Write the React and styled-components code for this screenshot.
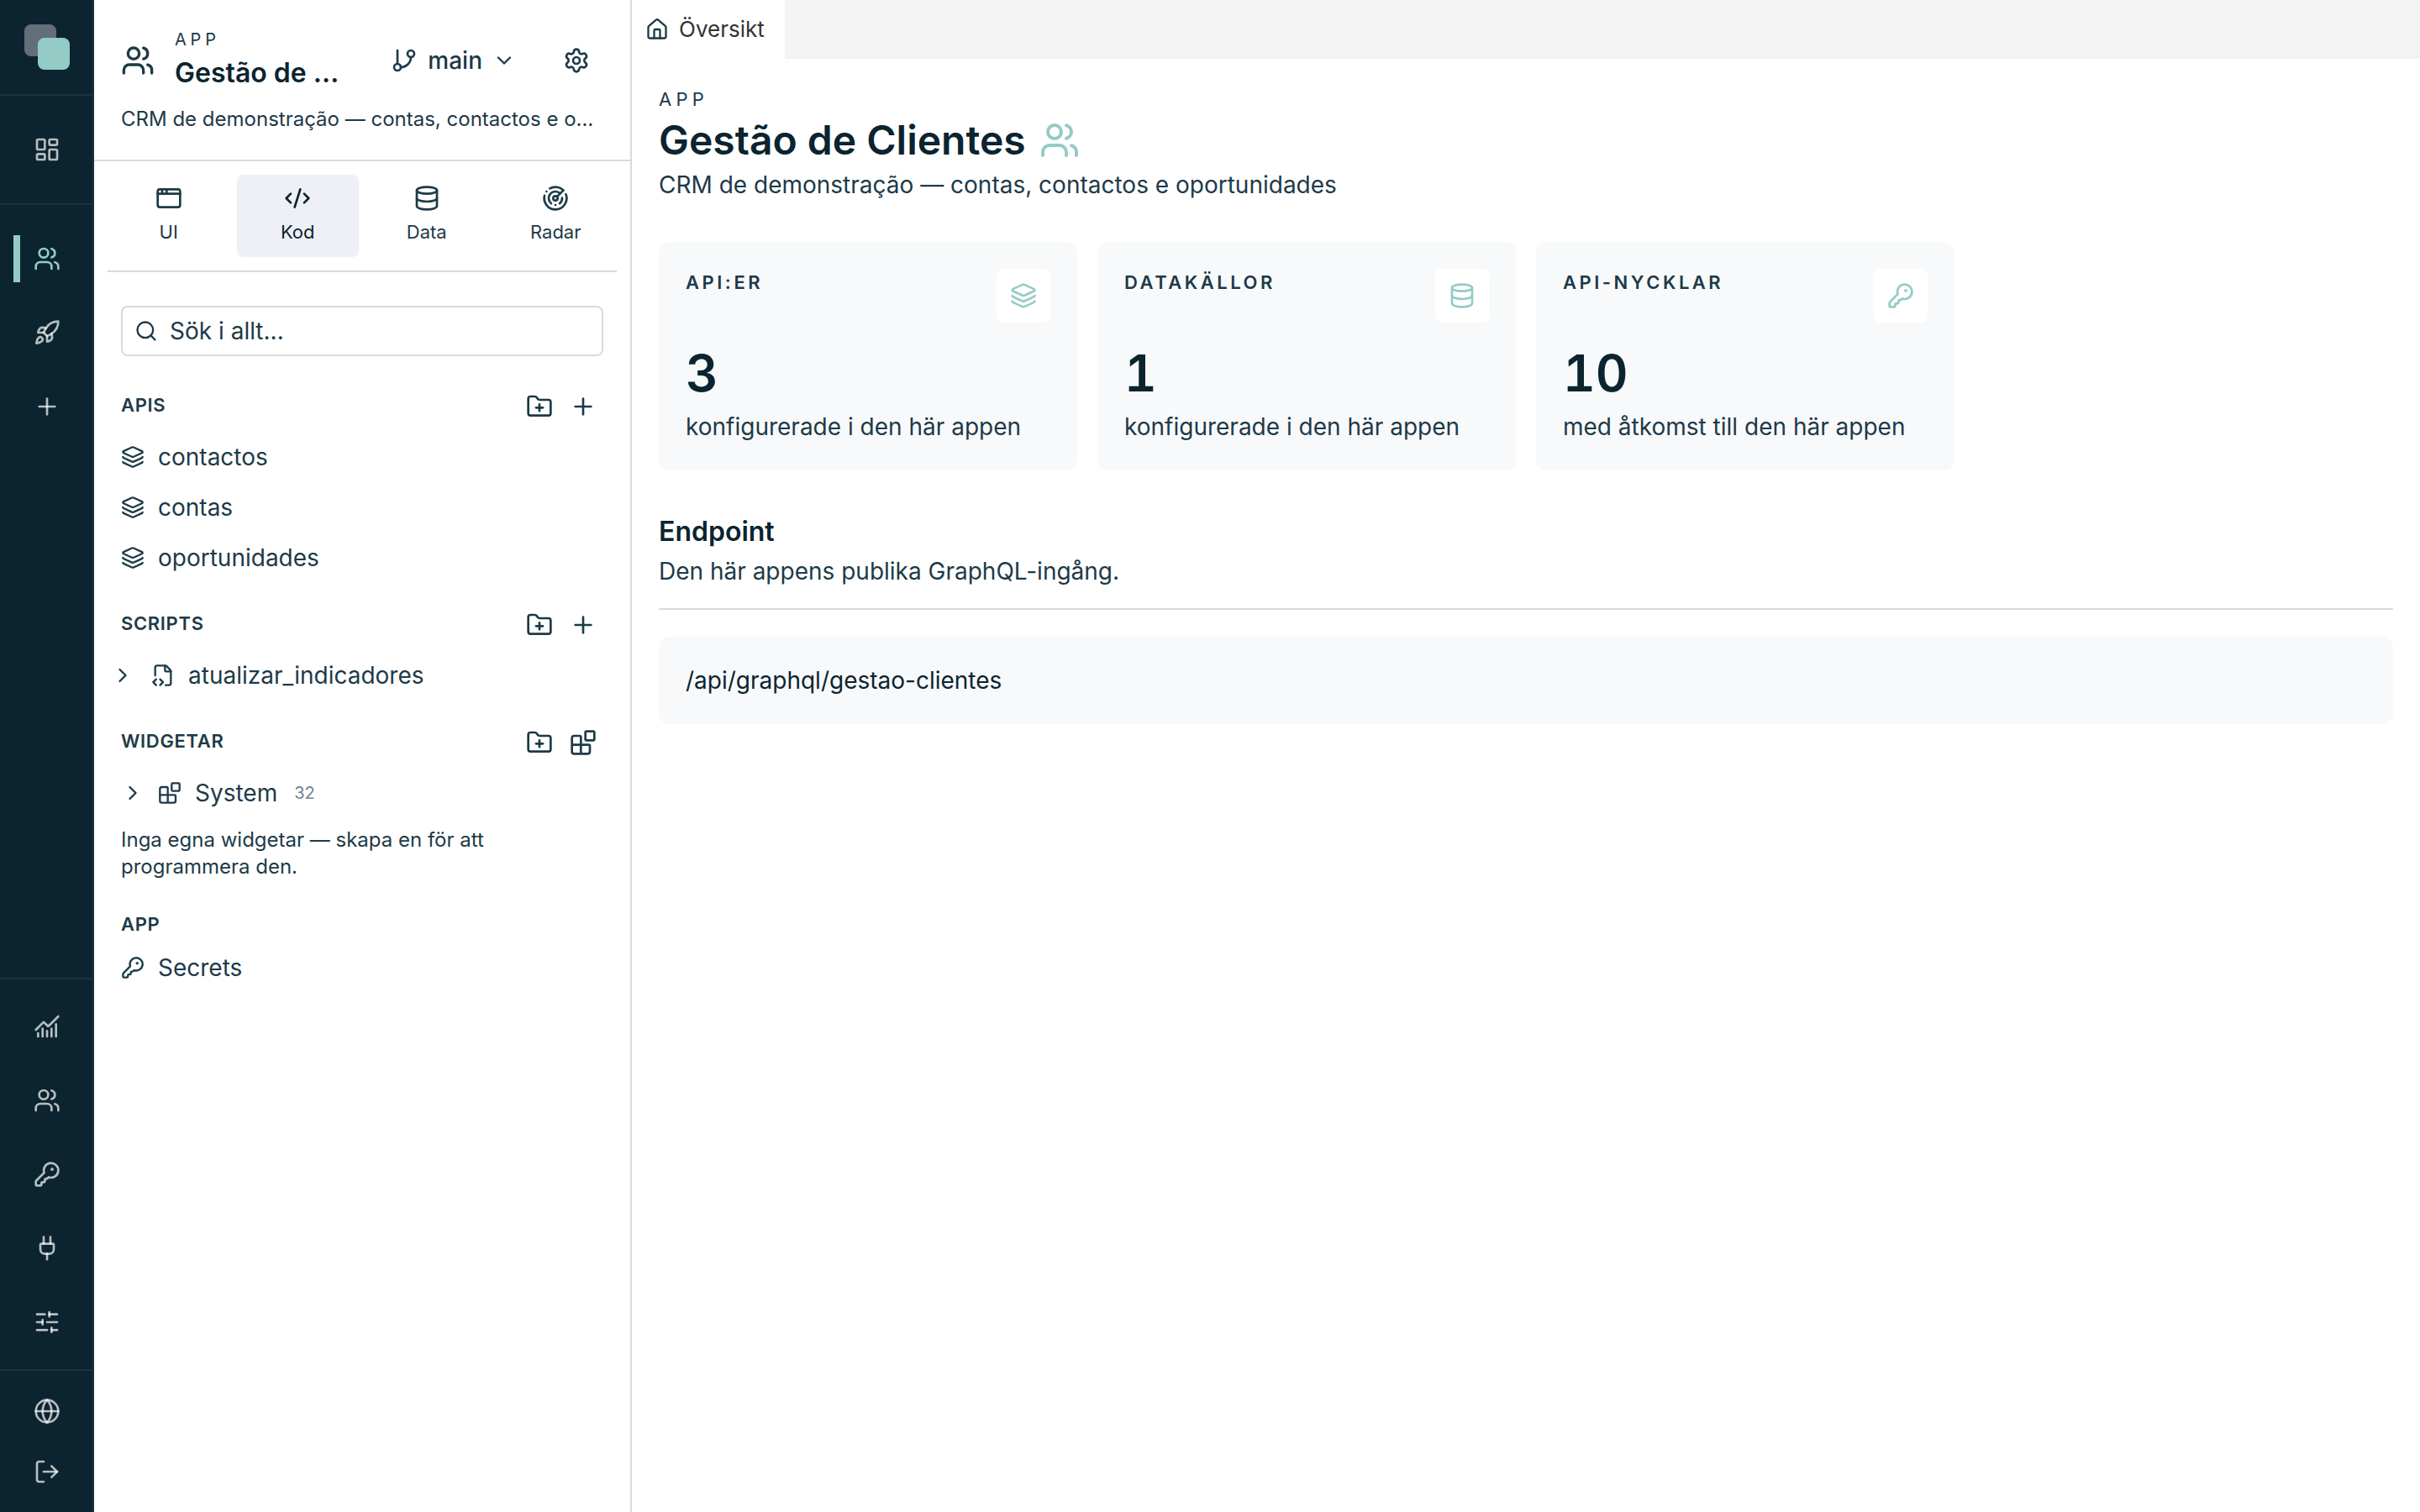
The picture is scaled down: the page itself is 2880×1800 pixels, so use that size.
import React from 'react';
import styled, { createGlobalStyle, css } from 'styled-components';
import {
  AppWindow, Blocks, ChartNoAxesCombined, ChevronDown, ChevronRight, CodeXml,
  Database, FileCode2, FolderPlus, GitBranch, Globe, House, KeyRound, Layers,
  LayoutDashboard, LogOut, Plug, Plus, Radar, Rocket, Search, Settings,
  SlidersHorizontal, Users,
} from 'lucide-react';

const color = {
  ink: '#0b242f',
  text: '#1d3a48',
  muted: '#74838d',
  line: '#d6dbe0',
  rail: '#0b242f',
  railLine: '#163341',
  accent: '#95cbc5',
  surface: '#f8f9fb',
  selected: '#eff0f5',
  tabBar: '#f3f3f3',
};

const GlobalStyle = createGlobalStyle`
  *, *::before, *::after { box-sizing: border-box; }
  body {
    margin: 0;
    background: #fff;
    color: ${color.text};
    font-family: Inter, "Liberation Sans", sans-serif;
    font-size: 28px;
    line-height: 40px;
  }
  h1, h2, h3, p { margin: 0; }
  button, input { font: inherit; color: inherit; }
  button { border: 0; padding: 0; background: none; cursor: pointer; }
  a { color: inherit; text-decoration: none; }
  svg { display: block; flex: none; }
`;

const truncate = css`
  overflow: hidden;
  text-overflow: ellipsis;
  white-space: nowrap;
`;

const Shell = styled.div`
  display: flex;
  min-height: 100vh;
`;

/* Rail */
const Rail = styled.nav`
  display: flex;
  flex-direction: column;
  flex: none;
  width: 112px;
  background: ${color.rail};
  box-shadow: inset -2px 0 ${color.railLine};
  color: rgba(255, 255, 255, 0.7);
`;

const RailLogo = styled.a`
  display: grid;
  place-items: center;
  height: 114px;
  border-bottom: 2px solid ${color.railLine};
`;

const RailGroup = styled.div`
  display: flex;
  flex-direction: column;
  align-items: center;
  gap: 8px;
  padding: ${(p) => p.$pad}px 0;
  border-top: ${(p) => (p.$top ? `2px solid ${color.railLine}` : '0')};
  border-bottom: ${(p) => (p.$bottom ? `2px solid ${color.railLine}` : '0')};
  margin-top: ${(p) => (p.$push ? 'auto' : '0')};
`;

const RailButton = styled.button`
  position: relative;
  display: grid;
  place-items: center;
  width: 80px;
  height: ${(p) => (p.$short ? 64 : 80)}px;
  color: ${(p) => (p.$active ? color.accent : 'inherit')};

  &::before {
    content: ${(p) => (p.$active ? '""' : 'none')};
    position: absolute;
    left: 0;
    top: 12px;
    bottom: 12px;
    width: 8px;
    background: ${color.accent};
  }
`;

/* Sidebar */
const Sidebar = styled.aside`
  flex: none;
  width: 640px;
  border-right: 2px solid ${color.line};
`;

const SidebarHeader = styled.header`
  display: flex;
  flex-direction: column;
  gap: 12px;
  padding: 32px 32px 30px;
  border-bottom: 2px solid ${color.line};
`;

const HeaderRow = styled.div`
  display: flex;
  align-items: center;
`;

const TitleBlock = styled.div`
  flex: 1;
  min-width: 0;
  margin: 0 24px;
`;

const Eyebrow = styled.p`
  font-size: ${(p) => (p.$large ? 22 : 20)}px;
  line-height: ${(p) => (p.$large ? 32 : 30)}px;
  letter-spacing: 0.24em;
`;

const SidebarTitle = styled.h2`
  color: ${color.ink};
  font-size: 32px;
  font-weight: 600;
  line-height: 50px;
  ${truncate}
`;

const SidebarText = styled.p`
  font-size: 24px;
  line-height: 36px;
  ${truncate}
`;

const BranchButton = styled.button`
  display: flex;
  align-items: center;
  gap: 12px;
  height: 64px;
  padding: 0 24px;
  margin-right: 16px;
  font-weight: 500;
`;

const SquareButton = styled.button`
  display: grid;
  place-items: center;
  width: ${(p) => p.$size}px;
  height: ${(p) => p.$size}px;
`;

const ModeTabs = styled.div`
  display: grid;
  grid-template-columns: repeat(4, 1fr);
  gap: 8px;
  margin: 0 16px;
  padding: 16px 0;
  border-bottom: 2px solid ${color.line};
`;

const ModeTab = styled.button`
  display: flex;
  flex-direction: column;
  align-items: center;
  gap: 6px;
  padding: 12px;
  border-radius: 8px;
  background: ${(p) => (p.$active ? color.selected : 'transparent')};
  color: ${(p) => (p.$active ? color.ink : 'inherit')};
  font-size: 22px;
  line-height: 36px;
`;

const SidebarBody = styled.div`
  padding: 40px 32px;
`;

const SearchBox = styled.label`
  display: flex;
  align-items: center;
  gap: 14px;
  height: 60px;
  padding: 0 14px;
  margin-bottom: 36px;
  border: 2px solid ${color.line};
  border-radius: 8px;
`;

const SearchInput = styled.input`
  flex: 1;
  min-width: 0;
  padding: 0;
  border: 0;
  outline: 0;
  background: none;

  &::placeholder { color: ${color.text}; opacity: 1; }
`;

const Section = styled.section`
  margin-bottom: 28px;
`;

const SectionHead = styled.div`
  display: flex;
  align-items: flex-start;
  justify-content: space-between;
  margin-bottom: 8px;
`;

const SectionTitle = styled.h3`
  font-size: 22px;
  font-weight: 600;
  line-height: ${(p) => (p.$alone ? 48 : 44)}px;
  letter-spacing: 0.03em;
`;

const Actions = styled.div`
  display: flex;
  gap: 4px;
`;

const Items = styled.div`
  display: flex;
  flex-direction: column;
  gap: 4px;
`;

const Item = styled.a`
  display: flex;
  align-items: center;
  gap: 16px;
  height: 56px;
`;

const TreeRow = styled.div`
  display: flex;
  align-items: center;
  gap: ${(p) => (p.$outdent ? 12 : 16)}px;
  margin-left: ${(p) => (p.$outdent ? -20 : 0)}px;
`;

const Toggle = styled.button`
  display: grid;
  place-items: center;
  width: ${(p) => (p.$wide ? 44 : 28)}px;
  height: 56px;
`;

const Count = styled.span`
  padding-left: 4px;
  color: ${color.muted};
  font-size: 20px;
`;

const Hint = styled.p`
  padding-top: 12px;
  font-size: 24px;
  line-height: 32px;
`;

/* Main */
const Main = styled.main`
  flex: 1;
  min-width: 0;
`;

const TabBar = styled.div`
  display: flex;
  height: 70px;
  background: ${color.tabBar};
`;

const DocTab = styled.button`
  display: flex;
  align-items: center;
  gap: 12px;
  padding: 0 24px 0 16px;
  background: #fff;
  font-size: 26px;
`;

const TabLabel = styled.span`
  color: #333;
`;

const Page = styled.div`
  padding: 32px;
`;

const PageTitle = styled.h1`
  display: flex;
  align-items: center;
  gap: 16px;
  color: ${color.ink};
  font-size: 48px;
  font-weight: 600;
  line-height: 66px;

  svg { color: ${color.accent}; }
`;

const Cards = styled.div`
  display: grid;
  grid-template-columns: repeat(4, 1fr);
  gap: 24px;
  margin: 48px 0;
`;

const Card = styled.article`
  padding: 32px;
  border-radius: 12px;
  background: ${color.surface};
`;

const CardTop = styled.div`
  display: flex;
  justify-content: space-between;
  margin-bottom: 24px;
`;

const CardLabel = styled.h3`
  font-size: 22px;
  font-weight: 600;
  line-height: 32px;
  letter-spacing: 0.16em;
`;

const CardIcon = styled.span`
  display: grid;
  place-items: center;
  width: 64px;
  height: 64px;
  border-radius: 8px;
  background: #fff;
  color: ${color.accent};
`;

const CardValue = styled.p`
  margin-bottom: 8px;
  color: ${color.ink};
  font-size: 60px;
  font-weight: 600;
  font-variant-numeric: tabular-nums;
  line-height: 72px;
`;

const EndpointHead = styled.header`
  display: flex;
  flex-direction: column;
  gap: 2px;
  padding-bottom: 24px;
  margin-bottom: 32px;
  border-bottom: 2px solid ${color.line};
`;

const EndpointTitle = styled.h2`
  color: ${color.ink};
  font-size: 32px;
  font-weight: 600;
  line-height: 50px;
`;

const EndpointPath = styled.p`
  padding: 32px;
  border-radius: 12px;
  background: ${color.surface};
  color: ${color.ink};
`;

function Logo() {
  return (
    <svg width="56" height="56" viewBox="0 0 56 56" aria-hidden="true">
      <rect x="1" y="1" width="38" height="38" rx="8" fill="#636f78" />
      <rect x="17" y="17" width="38" height="38" rx="8" fill={color.accent} />
    </svg>
  );
}

const workspaceLinks = [
  { label: 'Gestão de Clientes', icon: Users, active: true },
  { label: 'Lansera', icon: Rocket },
  { label: 'Ny app', icon: Plus },
];

const adminLinks = [
  { label: 'Statistik', icon: ChartNoAxesCombined },
  { label: 'Användare', icon: Users },
  { label: 'API-nycklar', icon: KeyRound },
  { label: 'Integrationer', icon: Plug },
  { label: 'Inställningar', icon: SlidersHorizontal },
];

const accountLinks = [
  { label: 'Språk', icon: Globe },
  { label: 'Logga ut', icon: LogOut },
];

const modes = [
  { label: 'UI', icon: AppWindow },
  { label: 'Kod', icon: CodeXml, active: true },
  { label: 'Data', icon: Database },
  { label: 'Radar', icon: Radar },
];

const cards = [
  { label: 'API:ER', value: 3, note: 'konfigurerade i den här appen', icon: Layers },
  { label: 'DATAKÄLLOR', value: 1, note: 'konfigurerade i den här appen', icon: Database },
  { label: 'API-NYCKLAR', value: 10, note: 'med åtkomst till den här appen', icon: KeyRound },
];

function RailButtons({ links, short }) {
  return links.map(({ label, icon: Icon, active }) => (
    <RailButton key={label} type="button" aria-label={label} $active={active} $short={short}>
      <Icon size={32} />
    </RailButton>
  ));
}

function SectionHeader({ title, addIcon: Add = Plus }) {
  return (
    <SectionHead>
      <SectionTitle>{title}</SectionTitle>
      <Actions>
        <SquareButton type="button" $size={48} aria-label="Ny mapp"><FolderPlus size={32} /></SquareButton>
        <SquareButton type="button" $size={48} aria-label="Lägg till"><Add size={32} /></SquareButton>
      </Actions>
    </SectionHead>
  );
}

export default function App() {
  return (
    <>
      <GlobalStyle />
      <Shell>
        <Rail>
          <RailLogo href="#" aria-label="Start"><Logo /></RailLogo>
          <RailGroup $pad={24} $bottom>
            <RailButtons links={[{ label: 'Panel', icon: LayoutDashboard }]} />
          </RailGroup>
          <RailGroup $pad={24}><RailButtons links={workspaceLinks} /></RailGroup>
          <RailGroup $pad={16} $top $push><RailButtons links={adminLinks} /></RailGroup>
          <RailGroup $pad={16} $top><RailButtons links={accountLinks} short /></RailGroup>
        </Rail>

        <Sidebar>
          <SidebarHeader>
            <HeaderRow>
              <Users size={40} />
              <TitleBlock>
                <Eyebrow>APP</Eyebrow>
                <SidebarTitle>Gestão de Clientes</SidebarTitle>
              </TitleBlock>
              <BranchButton type="button">
                <GitBranch size={32} />
                main
                <ChevronDown size={28} />
              </BranchButton>
              <SquareButton type="button" $size={64} aria-label="Inställningar"><Settings size={32} /></SquareButton>
            </HeaderRow>
            <SidebarText>CRM de demonstração — contas, contactos e oportunidades</SidebarText>
          </SidebarHeader>

          <ModeTabs>
            {modes.map(({ label, icon: Icon, active }) => (
              <ModeTab key={label} type="button" $active={active}>
                <Icon size={32} />
                {label}
              </ModeTab>
            ))}
          </ModeTabs>

          <SidebarBody>
            <SearchBox>
              <Search size={28} />
              <SearchInput type="text" placeholder="Sök i allt..." aria-label="Sök i allt" />
            </SearchBox>

            <Section>
              <SectionHeader title="APIS" />
              <Items>
                {['contactos', 'contas', 'oportunidades'].map((name) => (
                  <Item key={name} href="#"><Layers size={28} />{name}</Item>
                ))}
              </Items>
            </Section>

            <Section>
              <SectionHeader title="SCRIPTS" />
              <TreeRow $outdent>
                <Toggle type="button" $wide aria-label="Visa"><ChevronRight size={28} /></Toggle>
                <Item href="#"><FileCode2 size={28} />atualizar_indicadores</Item>
              </TreeRow>
            </Section>

            <Section>
              <SectionHeader title="WIDGETAR" addIcon={Blocks} />
              <TreeRow>
                <Toggle type="button" aria-label="Visa"><ChevronRight size={28} /></Toggle>
                <Item href="#"><Blocks size={28} />System<Count>32</Count></Item>
              </TreeRow>
              <Hint>Inga egna widgetar — skapa en för att programmera den.</Hint>
            </Section>

            <Section>
              <SectionTitle $alone>APP</SectionTitle>
              <Item href="#"><KeyRound size={28} />Secrets</Item>
            </Section>
          </SidebarBody>
        </Sidebar>

        <Main>
          <TabBar>
            <DocTab type="button"><House size={28} /><TabLabel>Översikt</TabLabel></DocTab>
          </TabBar>
          <Page>
            <header>
              <Eyebrow $large>APP</Eyebrow>
              <PageTitle>Gestão de Clientes<Users size={48} /></PageTitle>
              <p>CRM de demonstração — contas, contactos e oportunidades</p>
            </header>

            <Cards>
              {cards.map(({ label, value, note, icon: Icon }) => (
                <Card key={label}>
                  <CardTop>
                    <CardLabel>{label}</CardLabel>
                    <CardIcon><Icon size={32} /></CardIcon>
                  </CardTop>
                  <CardValue>{value}</CardValue>
                  <p>{note}</p>
                </Card>
              ))}
            </Cards>

            <section>
              <EndpointHead>
                <EndpointTitle>Endpoint</EndpointTitle>
                <p>Den här appens publika GraphQL-ingång.</p>
              </EndpointHead>
              <EndpointPath>/api/graphql/gestao-clientes</EndpointPath>
            </section>
          </Page>
        </Main>
      </Shell>
    </>
  );
}
